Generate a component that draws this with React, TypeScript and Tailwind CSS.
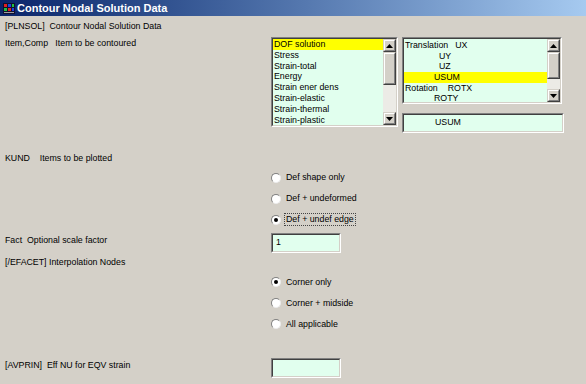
import React from "react";

const font = "font-['Liberation_Sans',Arial,sans-serif]";

const Sunken: React.FC<{ className?: string; inner?: string; children?: React.ReactNode }> = ({
  className = "",
  inner = "",
  children,
}) => (
  <div className={`border border-t-[#808080] border-l-[#808080] border-b-white border-r-white ${className}`}>
    <div className={`h-full w-full border border-t-[#404040] border-l-[#404040] border-b-[#d4d0c8] border-r-[#d4d0c8] bg-[#e1ffee] ${inner}`}>
      {children}
    </div>
  </div>
);

const ArrowBtn: React.FC<{ up?: boolean }> = ({ up }) => (
  <div className="h-[13px] w-[13px] shrink-0 border border-t-[#d4d0c8] border-l-[#d4d0c8] border-b-[#404040] border-r-[#404040]">
    <div className="flex h-full w-full items-center justify-center border border-t-white border-l-white border-b-[#808080] border-r-[#808080] bg-[#d4d0c8]">
      <svg width="7" height="4" viewBox="0 0 7 4">
        {up ? <path d="M3.5 0 L7 4 L0 4 Z" fill="#000" /> : <path d="M0 0 L7 0 L3.5 4 Z" fill="#000" />}
      </svg>
    </div>
  </div>
);

const Scrollbar: React.FC<{ thumb: number }> = ({ thumb }) => (
  <div className="flex h-full w-[13px] shrink-0 flex-col bg-[#ecebe6]">
    <ArrowBtn up />
    <div
      className="shrink-0 border border-t-[#d4d0c8] border-l-[#d4d0c8] border-b-[#404040] border-r-[#404040]"
      style={{ height: thumb }}
    >
      <div className="h-full w-full border border-t-white border-l-white border-b-[#808080] border-r-[#808080] bg-[#d4d0c8]" />
    </div>
    <div className="flex-1" />
    <ArrowBtn />
  </div>
);

const Radio: React.FC<{ label: string; checked?: boolean; focus?: boolean }> = ({ label, checked, focus }) => (
  <div className="flex h-[21px] items-center">
    <div className="relative h-[10px] w-[10px] shrink-0 rounded-full border border-t-[#808080] border-l-[#808080] border-b-[#ececec] border-r-[#ececec] bg-white">
      {checked && <div className="absolute left-[2px] top-[2px] h-[4px] w-[4px] rounded-full bg-black" />}
    </div>
    <span
      className={`ml-[3px] leading-[11px] ${focus ? "border border-dotted border-[#444] px-[1px]" : "border border-transparent px-[1px]"}`}
    >
      {label}
    </span>
  </div>
);

const items = [
  "DOF solution",
  "Stress",
  "Strain-total",
  "Energy",
  "Strain ener dens",
  "Strain-elastic",
  "Strain-thermal",
  "Strain-plastic",
];

const App: React.FC = () => {
  return (
    <div className={`h-[384px] w-[586px] overflow-hidden bg-[#d4d0c8] text-[8.8px] text-black ${font}`}>
      {/* Title bar */}
      <div className="flex h-[16px] items-center bg-gradient-to-r from-[#0a246a] to-[#a6caf0] pl-[3px]">
        <svg width="12" height="11" viewBox="0 0 12 11">
          <rect x="0" y="0" width="12" height="11" fill="#101030" />
          <rect x="1" y="1" width="3" height="3" fill="#e02020" />
          <rect x="5" y="1" width="3" height="3" fill="#2040e0" />
          <rect x="9" y="1" width="2" height="3" fill="#20c040" />
          <rect x="1" y="5" width="3" height="3" fill="#20c040" />
          <rect x="5" y="5" width="3" height="3" fill="#e02020" />
          <rect x="9" y="5" width="2" height="3" fill="#2040e0" />
          <rect x="1" y="9" width="10" height="1" fill="#a0a0a0" />
        </svg>
        <span className="ml-[2px] text-[11px] font-bold leading-[16px] text-white">Contour Nodal Solution Data</span>
      </div>

      <div className="px-[5px]">
        <div className="mt-[5px] h-[11px] leading-[11px]">[PLNSOL]&nbsp; Contour Nodal Solution Data</div>

        {/* Item,Comp */}
        <div className="mt-[5px] flex">
          <div className="w-[266px] pt-[1px] leading-[11px]">Item,Comp&nbsp;&nbsp; Item to be contoured</div>
          <div className="flex gap-[4px]">
            <Sunken className="h-[90px] w-[127px]" inner="flex">
              <div className="flex-1 overflow-hidden">
                {items.map((it, i) => (
                  <div
                    key={it}
                    className={`h-[10.8px] pl-[1px] leading-[10.8px] ${i === 0 ? "bg-[#ffff00]" : ""}`}
                  >
                    {it}
                  </div>
                ))}
              </div>
              <Scrollbar thumb={33} />
            </Sunken>
            <div className="flex flex-col">
              <Sunken className="h-[67px] w-[160px]" inner="flex">
                <div className="flex-1 overflow-hidden pt-[1px]">
                  <div className="h-[10.7px] pl-[1px] leading-[10.7px]">
                    Translation<span className="ml-[7px]">UX</span>
                  </div>
                  <div className="h-[10.7px] pl-[35px] leading-[10.7px]">UY</div>
                  <div className="h-[10.7px] pl-[35px] leading-[10.7px]">UZ</div>
                  <div className="h-[10.7px] bg-[#ffff00] pl-[30px] leading-[10.7px]">USUM</div>
                  <div className="h-[10.7px] pl-[1px] leading-[10.7px]">
                    Rotation<span className="ml-[10px]">ROTX</span>
                  </div>
                  <div className="h-[10.7px] pl-[30px] leading-[10.7px]">ROTY</div>
                </div>
                <Scrollbar thumb={27} />
              </Sunken>
              <Sunken className="mt-[9px] h-[20px] w-[162px]" inner="flex items-center pl-[31px]">
                USUM
              </Sunken>
            </div>
          </div>
        </div>

        {/* KUND */}
        <div className="mt-[20px] h-[11px] leading-[11px]">KUND&nbsp;&nbsp;&nbsp; Items to be plotted</div>
        <div className="mt-[3px] pl-[266px]">
          <Radio label="Def shape only" />
          <Radio label="Def + undeformed" />
          <Radio label="Def + undef edge" checked focus />
        </div>

        {/* Fact */}
        <div className="mt-[3px] flex items-start">
          <div className="w-[266px] pt-[2px] leading-[11px]">Fact&nbsp; Optional scale factor</div>
          <Sunken className="h-[20px] w-[70px]" inner="flex items-center pl-[3px]">
            1
          </Sunken>
        </div>

        {/* EFACET */}
        <div className="mt-[3.5px] h-[11px] leading-[11px]">[/EFACET] Interpolation Nodes</div>
        <div className="mt-[4px] pl-[266px]">
          <Radio label="Corner only" checked />
          <Radio label="Corner + midside" />
          <Radio label="All applicable" />
        </div>

        {/* AVPRIN */}
        <div className="mt-[23.5px] flex items-start">
          <div className="w-[266px] pt-[2px] leading-[11px]">[AVPRIN]&nbsp; Eff NU for EQV strain</div>
          <Sunken className="h-[20px] w-[70px]" />
        </div>
      </div>
    </div>
  );
};

export default App;
